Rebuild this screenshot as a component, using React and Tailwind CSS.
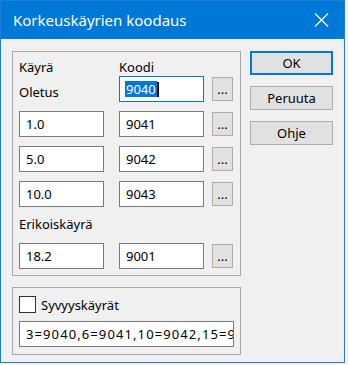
import React from 'react';

const Field = ({ value, width = 'w-[85px]', extra = '' }) => (
  <div className={`${width} h-[26px] border border-[#7a7a7a] bg-white flex items-center pl-[6px] overflow-hidden whitespace-nowrap ${extra}`}>
    {value}
  </div>
);

const DotsButton = () => (
  <div className="w-[21px] h-[24px] mt-[1px] border border-[#adadad] bg-[#e1e1e1] flex items-center justify-center leading-[18px]">
    ...
  </div>
);

const Row = ({ left, code }) => (
  <div className="flex h-[26px]">
    <Field value={left} />
    <div className="ml-[15px]">
      <Field value={code} />
    </div>
    <div className="ml-[8px]">
      <DotsButton />
    </div>
  </div>
);

const DialogButton = ({ label, primary }) => (
  <div
    className={`w-[83px] h-[24px] bg-[#e1e1e1] flex items-center justify-center ${
      primary ? 'border-2 border-[#0078d7]' : 'border border-[#adadad]'
    }`}
  >
    {label}
  </div>
);

export default function App() {
  return (
    <div className="w-[348px] h-[365px] bg-[#f4f4f4] font-['Noto_Sans','Liberation_Sans',sans-serif] text-[13px] leading-[18px] text-black">
      <div className="w-[345px] h-[363px] border border-[#1a7fd4] bg-[#f0f0f0] flex flex-col">
        {/* Title bar */}
        <div className="h-[38px] bg-[#0078d7] flex items-center justify-between pl-[12px] pr-[15px] text-white text-[15px]">
          <span>Korkeuskäyrien koodaus</span>
          <svg width="15" height="14" viewBox="0 0 15 14">
            <path d="M1 0.5 L14 13.5 M14 0.5 L1 13.5" stroke="white" strokeWidth="1.1" fill="none" />
          </svg>
        </div>

        <div className="flex pl-[11px] pt-[12px]">
          {/* Left column: group boxes */}
          <div className="w-[229px] flex flex-col">
            <div className="h-[225px] border border-[#a8a8a8] pl-[6px] pt-[6px]">
              <div className="flex h-[18px]">
                <span className="w-[100px]">Käyrä</span>
                <span>Koodi</span>
              </div>
              <div className="flex h-[26px]">
                <div className="w-[100px] pt-[7px]">Oletus</div>
                <div className="w-[85px] h-[26px] border border-[#0078d7] bg-white flex items-center pl-[5px]">
                  <span className="bg-[#0078d7] text-white pl-[1px] pr-[1px] h-[16px] leading-[16px]">9040</span>
                  <span className="w-[2px] h-[15px] bg-black" />
                </div>
                <div className="ml-[8px]">
                  <DotsButton />
                </div>
              </div>
              <div className="flex flex-col gap-[9px] mt-[9px]">
                <Row left="1.0" code="9041" />
                <Row left="5.0" code="9042" />
                <Row left="10.0" code="9043" />
              </div>
              <div className="mt-[8px] h-[18px]">Erikoiskäyrä</div>
              <div className="mt-[10px]">
                <Row left="18.2" code="9001" />
              </div>
            </div>

            <div className="mt-[11px] h-[68px] border border-[#a8a8a8] pl-[6px] pt-[8px]">
              <div className="flex items-center h-[17px]">
                <div className="w-[17px] h-[17px] border border-[#333333] bg-white" />
                <span className="ml-[5px]">Syvyyskäyrät</span>
              </div>
              <div className="mt-[8px]">
                <Field value="3=9040,6=9041,10=9042,15=9043" width="w-[215px]" extra="tracking-[1.1px]" />
              </div>
            </div>
          </div>

          {/* Right column: buttons */}
          <div className="ml-[9px] flex flex-col gap-[11px]">
            <DialogButton label="OK" primary />
            <DialogButton label="Peruuta" />
            <DialogButton label="Ohje" />
          </div>
        </div>
      </div>
    </div>
  );
}
